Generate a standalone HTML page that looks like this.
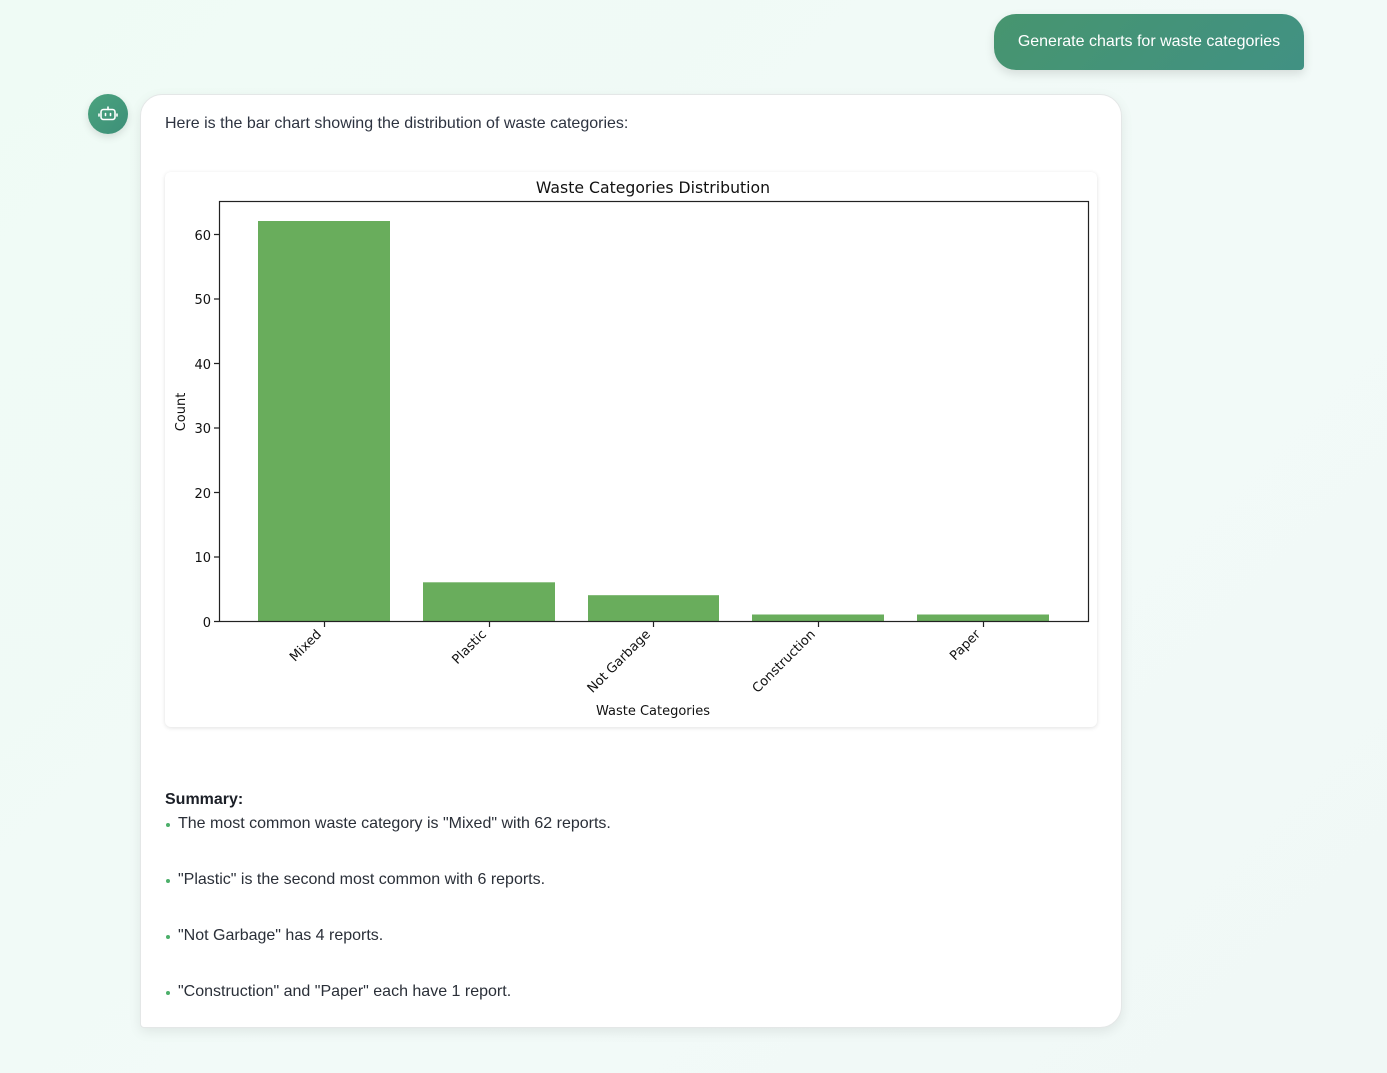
<!DOCTYPE html>
<html><head><meta charset="utf-8"><style>
html,body{margin:0;padding:0}
body{width:1387px;height:1073px;position:relative;overflow:hidden;font-family:"Liberation Sans",Arial,sans-serif;background:linear-gradient(135deg,#effbf5 0%,#f2faf8 60%,#f0f8f6 100%);color:#222}
.user{position:absolute;left:994px;top:14px;width:310px;height:56px;border-radius:22px 22px 4px 22px;background:linear-gradient(135deg,#47956f,#419183);color:#fff;font-size:16px;line-height:56px;text-align:center;box-shadow:0 4px 10px rgba(0,0,0,.12)}
.avatar{position:absolute;left:88px;top:94px;width:40px;height:40px;border-radius:50%;background:linear-gradient(135deg,#4aa37e,#3d8f78);box-shadow:0 3px 8px rgba(0,0,0,.12)}
.card{position:absolute;left:140px;top:94px;width:982px;height:934px;background:#fff;border:1px solid #e4e7e7;border-radius:22px 22px 22px 4px;box-sizing:border-box;box-shadow:0 4px 12px rgba(0,0,0,.08)}
.intro{position:absolute;left:165px;top:115px;font-size:16px;color:#2d3340}
.chart{position:absolute;left:165px;top:172px;width:932px;height:555px;background:#fff;border-radius:6px;box-shadow:0 1px 4px rgba(0,0,0,.12)}
.sum{position:absolute;left:165px;font-size:16px;color:#2a2f38}
.b{position:absolute;left:165px;font-size:16px;color:#2a2f38}
.b:before{content:"";position:absolute;left:1px;top:8px;width:4px;height:4px;border-radius:50%;background:#4caf6a}
.b span{margin-left:13px}
</style></head><body>
<div class="user">Generate charts for waste categories</div>
<div class="avatar"><svg width="40" height="40" viewBox="0 0 40 40" fill="none" stroke="#fff" stroke-width="1.6" stroke-linecap="round" stroke-linejoin="round"><rect x="13" y="15.5" width="14" height="10" rx="2.5"/><path d="M20 15.5V13"/><path d="M11 20v2M29 20v2"/><path d="M17.5 19.5v2M22.5 19.5v2"/></svg></div>
<div class="card"></div>
<div class="intro">Here is the bar chart showing the distribution of waste categories:</div>
<div class="chart"></div>
<svg style="position:absolute;left:0;top:0" width="1387" height="1073" font-family="DejaVu Sans,sans-serif" fill="#111">
<text x="653" y="193" font-size="15.7" text-anchor="middle">Waste Categories Distribution</text>
<g fill="#69ad5c">
<rect x="258" y="221" width="132" height="400"/>
<rect x="423" y="582.3" width="132" height="38.7"/>
<rect x="588" y="595.2" width="131" height="25.8"/>
<rect x="752" y="614.5" width="132" height="6.5"/>
<rect x="917" y="614.5" width="132" height="6.5"/>
</g>
<rect x="219.5" y="201.5" width="869" height="420" fill="none" stroke="#222" stroke-width="1.2"/>
<g stroke="#222" stroke-width="1.2">
<path d="M214 621.5h5M214 557h5M214 492.5h5M214 428h5M214 363.5h5M214 299h5M214 234.5h5"/>
<path d="M324.5 622v5M489.5 622v5M653.5 622v5M818.5 622v5M983.5 622v5"/>
</g>
<g font-size="13" text-anchor="end">
<text x="211" y="627">0</text><text x="211" y="562">10</text><text x="211" y="498">20</text><text x="211" y="433">30</text><text x="211" y="369">40</text><text x="211" y="304">50</text><text x="211" y="240">60</text>
<text transform="translate(322,635) rotate(-45)">Mixed</text>
<text transform="translate(487,635) rotate(-45)">Plastic</text>
<text transform="translate(651,635) rotate(-45)">Not Garbage</text>
<text transform="translate(816,635) rotate(-45)">Construction</text>
<text transform="translate(981,635) rotate(-45)">Paper</text>
</g>
<text x="653" y="715" font-size="13" text-anchor="middle">Waste Categories</text>
<text transform="translate(185,412) rotate(-90)" font-size="13" text-anchor="middle">Count</text>
</svg>
<div class="sum" style="top:791px;font-weight:bold;color:#1b1f27">Summary:</div>
<div class="b" style="top:815px"><span>The most common waste category is "Mixed" with 62 reports.</span></div>
<div class="b" style="top:871px"><span>"Plastic" is the second most common with 6 reports.</span></div>
<div class="b" style="top:927px"><span>"Not Garbage" has 4 reports.</span></div>
<div class="b" style="top:983px"><span>"Construction" and "Paper" each have 1 report.</span></div>
</body></html>
